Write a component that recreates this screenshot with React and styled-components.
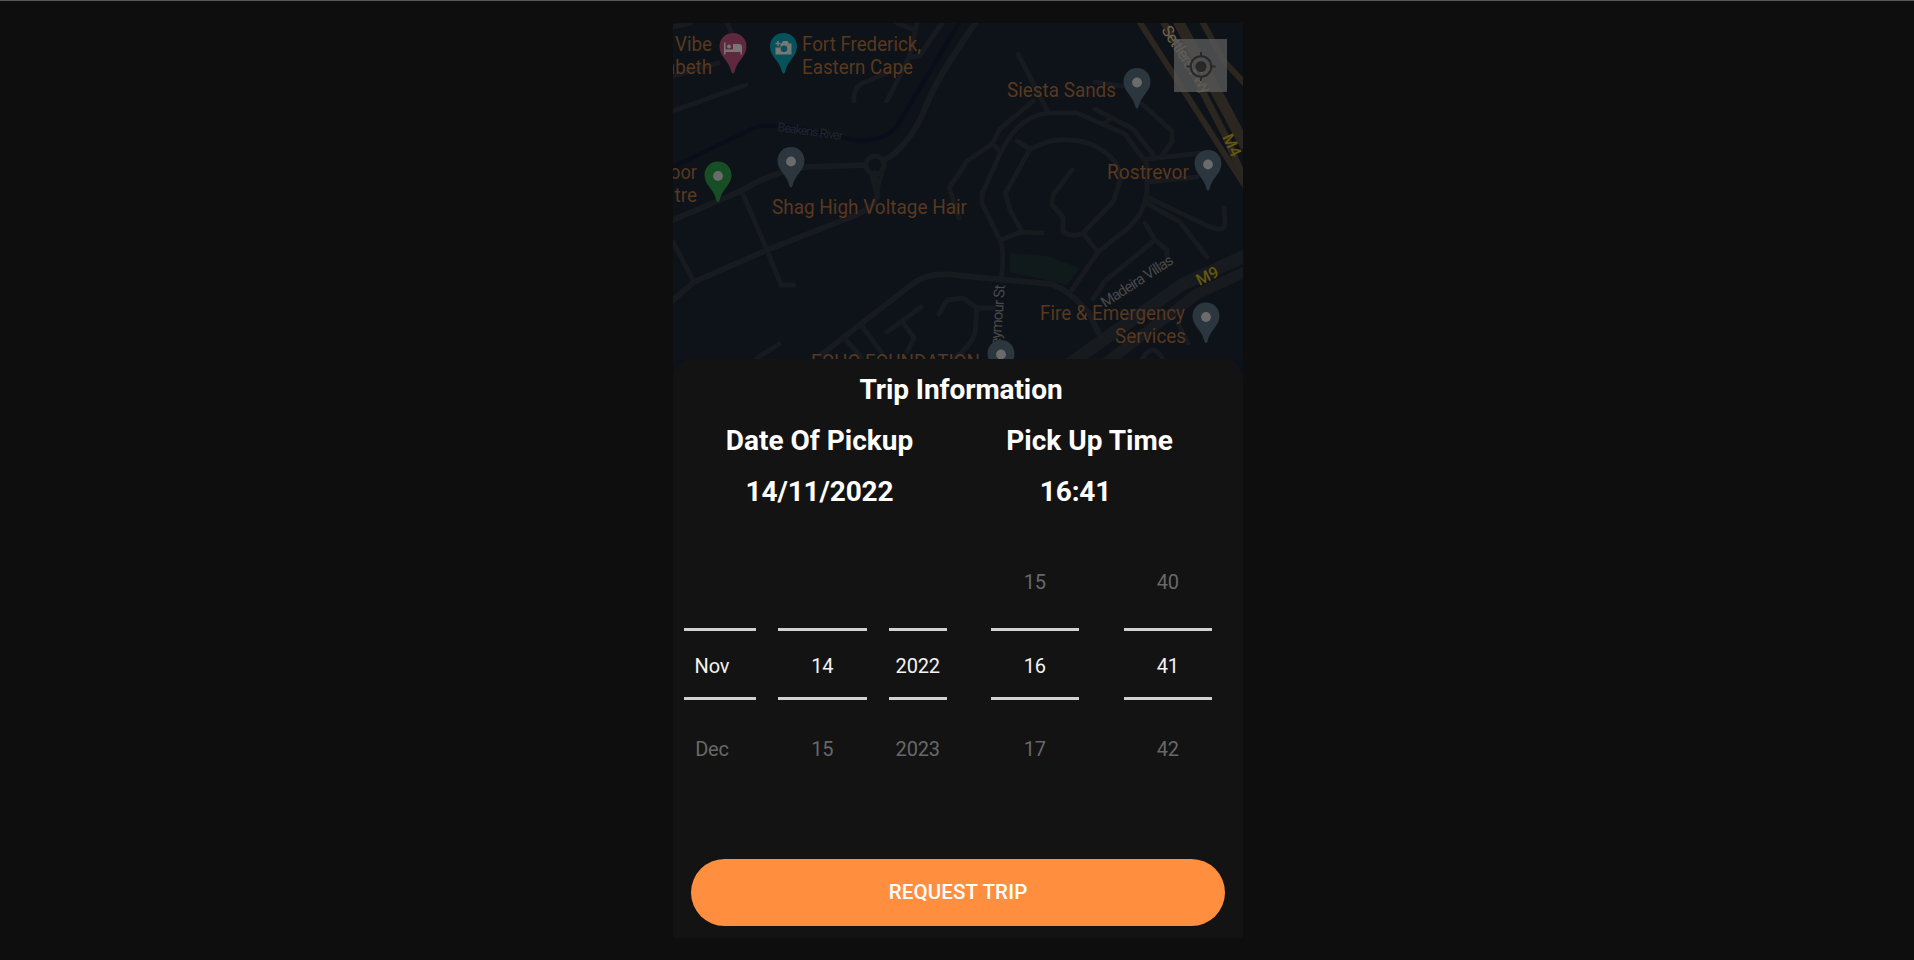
import React from "react";
import styled, { createGlobalStyle } from "styled-components";

const GlobalStyle = createGlobalStyle`
  * { box-sizing: border-box; }
  body { margin: 0; background: #0e0e0e; font-family: Roboto, "Liberation Sans", sans-serif; }
`;

const Page = styled.main`
  display: flex;
  justify-content: center;
  height: 960px;
  padding-top: 22px;
  border-top: 1px solid #56585a;
  background: #0e0e0e;
  overflow: hidden;
`;

const Phone = styled.section`
  display: flex;
  flex-direction: column;
  width: 570px;
  height: 915px;
  margin-left: 2px;
  background: #0c121b;
  overflow: hidden;
`;

const MapArea = styled.div`
  position: relative;
  flex: 0 0 336px;
  overflow: hidden;
`;

const MapCanvas = styled.svg`
  display: block;
  width: 570px;
  height: 336px;
  font-family: Roboto, "Liberation Sans", sans-serif;
`;

const LocateButton = styled.button`
  position: absolute;
  top: 16px;
  right: 16px;
  display: grid;
  place-items: center;
  width: 53px;
  height: 53px;
  padding: 0;
  border: 0;
  background: rgba(90, 90, 90, 0.78);
`;

const Sheet = styled.div`
  display: flex;
  flex-direction: column;
  flex: 1;
  border-radius: 20px 20px 0 0;
  background: #131313;
`;

const Heading = styled.h1`
  margin: 5px 0 0 6px;
  font-size: 28px;
  line-height: 51px;
  font-weight: 700;
  letter-spacing: -0.08px;
  text-align: center;
  color: #fff;
`;

const Summary = styled.div`
  display: grid;
  grid-template-columns: 293px 247px;
`;

const SummaryText = styled.div`
  padding-right: ${(p) => p.$inset || 0}px;
  font-size: 28px;
  line-height: 51px;
  font-weight: 700;
  letter-spacing: ${(p) => p.$tracking || 0}px;
  text-align: center;
  white-space: nowrap;
  color: #fff;
`;

const Pickers = styled.div`
  display: flex;
  height: 252px;
  margin: 21px 0 0 10.5px;
`;

const Wheel = styled.div`
  display: flex;
  flex-direction: column;
  width: ${(p) => p.$width}px;
  margin-right: ${(p) => p.$gap}px;
`;

const Option = styled.div`
  height: ${(p) => (p.$selected ? 72.5 : 89.75)}px;
  padding-top: ${(p) => p.$pad}px;
  padding-right: ${(p) => p.$shift || 0}px;
  border: solid #d2d2d2;
  border-width: ${(p) => (p.$selected ? "3px 0" : "0")};
  font-size: 20px;
  line-height: 24px;
  letter-spacing: -0.15px;
  text-align: center;
  color: ${(p) => (p.$selected ? "#f3f3f3" : "#686868")};
`;

const RequestButton = styled.button`
  height: 67px;
  margin: auto 18px 12px;
  padding: 0 0 2px;
  border: 0;
  border-radius: 34px;
  background: #ff8f3f;
  color: #fff;
  font: 500 20.5px/24px Roboto, "Liberation Sans", sans-serif;
  letter-spacing: 0.15px;
`;

const streets = [
  "M0 88 73 62", "M0 4 18 0", "M54 0 61 15", "M0 53 45 40",
  "M181 78Q180 63 192 59L214 50", "M214 78 236 34 244 0", "M224 0 241 7", "M238 34 246 33 269 0",
  "M69 169 94 227 108 262H121", "M0 219 21 259", "M291 144 276 164 286 195",
  "M277 164 294 138 319 121 327 106 360 78", "M319 121 327 128", "M345 31 375 89",
  "M309 171 327 131Q345 92 377 90H404L452 111 474 141V167Q472 195 445 213L425 229 399 267",
  "M309 169V180L327 217Q332 228 328 257", "M422 86 460 106 482 134", "M432 100 439 95",
  "M332 171 357 126 377 118Q405 114 424 124 449 138 447 158L440 179 410 210Q400 215 390 209V194L379 182Q380 168 384 167L399 147",
  "M344 118 357 126", "M332 169 337 187 349 209", "M327 217 349 209 369 210", "M410 210 425 229",
  "M474 136 530 130", "M474 159 524 154", "M469 81 499 108V119L490 131", "M422 59 450 63",
  "M474 174 537 204Q552 210 552 200L551 185", "M474 180 507 199 534 234",
  "M472 200 482 217 432 258 420 276", "M482 217 494 227V233",
  "M188 302 209 330", "M173 317 188 334", "M214 309 248 284", "M229 298 241 315 234 329",
  "M266 291 274 277 290 275 304 285H320", "M304 285 302 310Q298 324 280 336", "M84 335 106 321",
  "M469 336Q480 318 490 336", "M505 300 515 320",
];

const avenues = [
  "M302 0 277 38Q262 60 250 90 240 114 221 131L210 138", "M193 142 134 144Q100 148 68 168L0 197",
  "M202 150 204 171Q204 184 178 194L94 227 21 259 0 277",
  "M148 332 238 262Q256 247 291 253L377 261Q394 265 416 290L429 317",
];

const labels = [
  { x: 39, y: 27.5, w: 37, end: true, text: "Vibe" },
  { x: 39, y: 50.5, w: 47, end: true, text: "abeth" },
  { x: 129, y: 27.5, w: 119, text: "Fort Frederick," },
  { x: 129, y: 50.5, w: 111, text: "Eastern Cape" },
  { x: 334, y: 73.5, w: 109, text: "Siesta Sands" },
  { x: 434, y: 156, w: 82, text: "Rostrevor" },
  { x: 24, y: 156, w: 27, end: true, text: "oor" },
  { x: 24, y: 178.5, w: 22.5, end: true, text: "tre" },
  { x: 99, y: 190.5, w: 195, text: "Shag High Voltage Hair" },
  { x: 367, y: 297, w: 145, text: "Fire & Emergency" },
  { x: 442, y: 319.5, w: 71, text: "Services" },
  { x: 138, y: 346, w: 169, text: "ECHO FOUNDATION" },
];

const pins = [
  { x: 60, y: 10, fill: "#60283d", icon: "bed" },
  { x: 110.5, y: 10, fill: "#07515b", icon: "camera" },
  { x: 118, y: 124, fill: "#2c363e" },
  { x: 45, y: 138.5, fill: "#174e25" },
  { x: 464, y: 45, fill: "#2c363e" },
  { x: 535, y: 127, fill: "#2c363e" },
  { x: 533, y: 279.5, fill: "#2c363e" },
  { x: 328, y: 317, fill: "#2c363e" },
];

function Pin({ x, y, fill, icon }) {
  return (
    <g transform={`translate(${x} ${y})`}>
      <path d="M0 0C8 0 13.5 6 13.5 13.5 13.5 24 4 27 1.5 39Q0 42-1.5 39C-4 27-13.5 24-13.5 13.5-13.5 6-8 0 0 0Z" fill={fill} />
      {!icon && <circle cy="14.5" r="4.9" fill="#6b6b6b" />}
      {icon === "bed" && (
        <g fill="#777">
          <path d="M-9 9.5H-7.5V16.5H0V11H6Q9 11 9 14V21.5H7.5V19H-7.5V21.5H-9Z" />
          <circle cx="-4" cy="13.5" r="2" />
        </g>
      )}
      {icon === "camera" && (
        <g>
          <path d="M-2 10.5 -.5 8H4L5.5 10.5H8V21.5H-8V14.5H-3V10.5Z" fill="#777" />
          <circle cx=".5" cy="15.8" r="3.3" fill={fill} />
          <path d="M-5.5 8V13M-8 10.5H-3" stroke="#777" strokeWidth="1.4" />
        </g>
      )}
    </g>
  );
}

function TripMap() {
  return (
    <MapCanvas viewBox="0 0 570 336" role="img" aria-label="Map">
      <rect width="570" height="336" fill="#0e1219" />
      <path d="M337 230 374 233 407 245 394 262 337 249Z" fill="#101a1b" />
      <path d="M0 144 81 105Q88 101 120 104L180 117Q210 120 224 103L286 0" fill="none" stroke="#0a0e1a" strokeWidth="4" />
      <g fill="none" stroke="#171a1e" strokeLinecap="round" strokeLinejoin="round">
        {streets.map((d) => <path key={d} d={d} strokeWidth="5" />)}
        {avenues.map((d) => <path key={d} d={d} strokeWidth="6" />)}
        <circle cx="202" cy="142" r="9" strokeWidth="5" />
        <path d="M198 151 203 171 209 151" strokeWidth="4" />
        <path d="M574 232 510 261 396 341" strokeWidth="13" />
        <path d="M574 248 524 271 434 339" strokeWidth="11" />
      </g>
      <g fill="none" stroke="#2b261f">
        <path d="M466-2 572 163" strokeWidth="6" />
        <path d="M490-2 521 52 552 112 572 158" strokeWidth="7" />
        <path d="M505-2 536 55 573 124" strokeWidth="11" />
        <path d="M529-2 550 37 573 62" strokeWidth="6" />
      </g>
      <g fontSize="12.5" fill="#20252f">
        <text transform="translate(104 108) rotate(8)" textLength="66">Beakens River</text>
      </g>
      <g fill="#484848">
        <text transform="translate(488 7) rotate(57)" fontSize="16" fill="#75664e" textLength="77">Settlers Fwy</text>
        <text transform="translate(432 285) rotate(-33)" fontSize="15" textLength="83">Madeira Villas</text>
        <text transform="translate(327 331) rotate(-86)" fontSize="15" textLength="69">Seymour St</text>
      </g>
      <g fill="#655710" fontSize="16" fontWeight="500">
        <text transform="translate(549 114) rotate(65)">M4</text>
        <text transform="translate(526.5 263) rotate(-27)">M9</text>
      </g>
      <g fill="#58391f" fontSize="19.5">
        {labels.map((l) => (
          <text key={l.text} x={l.x} y={l.y} textLength={l.w} lengthAdjust="spacingAndGlyphs" textAnchor={l.end ? "end" : "start"}>
            {l.text}
          </text>
        ))}
      </g>
      {pins.map((p) => <Pin key={`${p.x}-${p.y}`} {...p} />)}
    </MapCanvas>
  );
}

function LocateIcon() {
  return (
    <svg width="30" height="30" viewBox="0 0 30 30" fill="none" stroke="#282828" strokeWidth="2">
      <circle cx="15" cy="15.5" r="10.3" />
      <circle cx="15" cy="15.5" r="5.5" fill="#282828" stroke="none" />
      <path d="M15 1V5.5M15 25.5V30M.5 15.5H5M25 15.5H29.5" />
    </svg>
  );
}

const wheels = [
  { width: 72.5, gap: 22, shift: 15.5, values: ["", "Nov", "Dec"] },
  { width: 88.5, gap: 22, values: ["", "14", "15"] },
  { width: 58.5, gap: 43.5, values: ["", "2022", "2023"] },
  { width: 88.5, gap: 44.5, values: ["15", "16", "17"] },
  { width: 88.5, gap: 0, values: ["40", "41", "42"] },
];

export default function App() {
  return (
    <>
      <GlobalStyle />
      <Page>
        <Phone>
          <MapArea>
            <TripMap />
            <LocateButton aria-label="My location"><LocateIcon /></LocateButton>
          </MapArea>
          <Sheet>
            <Heading>Trip Information</Heading>
            <Summary>
              <SummaryText>Date Of Pickup</SummaryText>
              <SummaryText>Pick Up Time</SummaryText>
              <SummaryText $tracking={-0.15}>14/11/2022</SummaryText>
              <SummaryText $tracking={-0.15} $inset={28}>16:41</SummaryText>
            </Summary>
            <Pickers>
              {wheels.map((w, i) => (
                <Wheel key={i} $width={w.width} $gap={w.gap}>
                  <Option $pad={32} $shift={w.shift}>{w.values[0]}</Option>
                  <Option $selected $pad={23} $shift={w.shift}>{w.values[1]}</Option>
                  <Option $pad={37} $shift={w.shift}>{w.values[2]}</Option>
                </Wheel>
              ))}
            </Pickers>
            <RequestButton>REQUEST TRIP</RequestButton>
          </Sheet>
        </Phone>
      </Page>
    </>
  );
}
